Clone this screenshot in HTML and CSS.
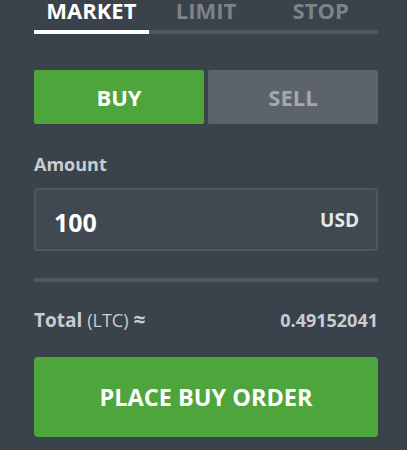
FILE: index.html
```html
<!DOCTYPE html>
<html>
<head>
<meta charset="utf-8">
<link rel="stylesheet" href="styles.css">
</head>
<body>
<div class="panel">
  <div class="tabs">
    <div class="tab active">MARKET</div>
    <div class="tab">LIMIT</div>
    <div class="tab">STOP</div>
  </div>
  <div class="side">
    <div class="side-btn buy">BUY</div>
    <div class="side-btn sell">SELL</div>
  </div>
  <div class="label">Amount</div>
  <div class="input">
    <span class="value">100</span>
    <span class="unit">USD</span>
  </div>
  <div class="divider"></div>
  <div class="total">
    <span class="total-label"><b>Total</b> <span class="ccy">(LTC)</span> <b class="approx">≈</b></span>
    <span class="total-value">0.49152041</span>
  </div>
  <div class="place">PLACE BUY ORDER</div>
</div>
</body>
</html>
```
FILE: styles.css
```css
html, body {
  margin: 0;
  padding: 0;
  background: #3a434c;
}
body {
  font-family: "Open Sans", "DejaVu Sans", sans-serif;
  width: 407px;
  height: 450px;
  overflow: hidden;
}
.panel {
  padding: 0 29px 0 34px;
}
.tabs {
  display: flex;
}
.tab {
  flex: 1;
  text-align: center;
  font-weight: 700;
  font-size: 22px;
  line-height: 21px;
  padding-bottom: 9px;
  color: #7c8288;
  border-bottom: 4px solid #4f5861;
}
.tab.active {
  color: #ffffff;
  border-bottom-color: #ffffff;
}
.side {
  display: flex;
  gap: 4px;
  margin-top: 36px;
}
.side-btn {
  flex: 1;
  height: 54px;
  display: flex;
  align-items: center;
  justify-content: center;
  font-weight: 700;
  font-size: 22px;
  border-radius: 2px;
}
.buy {
  background: #4da53c;
  color: #ffffff;
}
.sell {
  background: #5c636b;
  color: #a3a8ad;
}
.label {
  margin-top: 28px;
  font-weight: 700;
  font-size: 18px;
  line-height: 24px;
  color: #c9ccd0;
}
.input {
  margin-top: 12px;
  height: 59px;
  border: 2px solid #4e5760;
  border-radius: 3px;
  background: #404952;
  display: flex;
  align-items: center;
  justify-content: space-between;
  padding: 0 17px 0 18px;
}
.value {
  font-weight: 700;
  font-size: 25px;
  color: #ffffff;
  margin-top: 4px;
}
.unit {
  font-weight: 700;
  font-size: 19px;
  color: #e5e7e9;
}
.divider {
  margin-top: 27px;
  height: 4px;
  background: #4f5861;
}
.total {
  margin-top: 24px;
  display: flex;
  justify-content: space-between;
  align-items: baseline;
  color: #c9ccd0;
  line-height: 26px;
}
.total-label {
  font-size: 19px;
}
.total-label b {
  font-weight: 700;
}
.ccy {
  font-weight: 400;
  font-size: 18px;
}
.approx {
  font-size: 21px;
}
.total-value {
  font-weight: 700;
  font-size: 18px;
}
.place {
  margin-top: 24px;
  height: 80px;
  background: #4da53c;
  border-radius: 4px;
  display: flex;
  align-items: center;
  justify-content: center;
  color: #ffffff;
  font-weight: 700;
  font-size: 23.5px;
}
```
